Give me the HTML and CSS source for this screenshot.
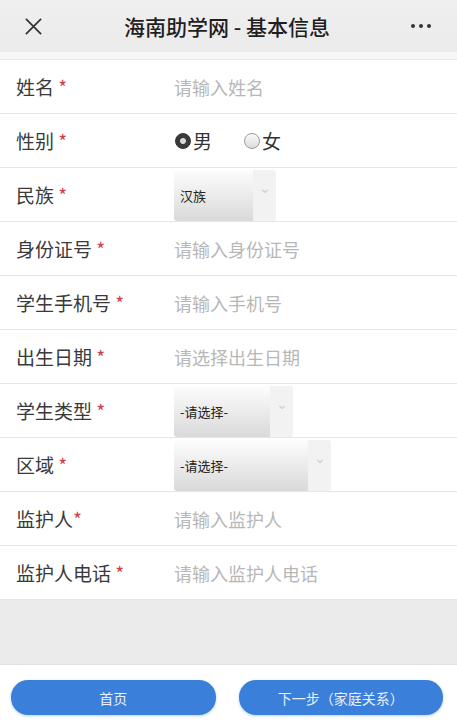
FILE: index.html
```html
<!DOCTYPE html>
<html lang="zh-CN">
  <head>
    <meta charset="UTF-8" />
    <meta name="viewport" content="width=device-width, initial-scale=1.0" />
    <title>海南助学网 - 基本信息</title>
    <link rel="stylesheet" href="styles.css">
  </head>
  <body>
    <header class="topbar">
      <svg class="close" width="20" height="20" viewBox="0 0 20 20">
        <path d="M2 2 L18 18 M18 2 L2 18" stroke="#333" stroke-width="1.8" fill="none" />
      </svg>
      <h1>海南助学网 - 基本信息</h1>
      <span class="more"><i></i><i></i><i></i></span>
    </header>
    <div class="gap"></div>

    <form class="info-form">
      <div class="row">
        <label>姓名 <em>*</em></label>
        <input type="text" placeholder="请输入姓名" />
      </div>
      <div class="row">
        <label>性别 <em>*</em></label>
        <div class="radios">
          <span class="radio checked"></span><span class="opt">男</span>
          <span class="radio"></span><span class="opt">女</span>
        </div>
      </div>
      <div class="row">
        <label>民族 <em>*</em></label>
        <div class="select w-nation"><span>汉族</span><b>&#8964;</b></div>
      </div>
      <div class="row">
        <label>身份证号 <em>*</em></label>
        <input type="text" placeholder="请输入身份证号" />
      </div>
      <div class="row">
        <label>学生手机号 <em>*</em></label>
        <input type="text" placeholder="请输入手机号" />
      </div>
      <div class="row">
        <label>出生日期 <em>*</em></label>
        <input type="text" placeholder="请选择出生日期" />
      </div>
      <div class="row">
        <label>学生类型 <em>*</em></label>
        <div class="select w-type"><span>-请选择-</span><b>&#8964;</b></div>
      </div>
      <div class="row">
        <label>区域 <em>*</em></label>
        <div class="select w-area"><span>-请选择-</span><b>&#8964;</b></div>
      </div>
      <div class="row">
        <label>监护人<em>*</em></label>
        <input type="text" placeholder="请输入监护人" />
      </div>
      <div class="row">
        <label>监护人电话 <em>*</em></label>
        <input type="text" placeholder="请输入监护人电话" />
      </div>
    </form>

    <div class="filler"></div>

    <footer class="actions">
      <button type="button">首页</button>
      <button type="button">下一步（家庭关系）</button>
    </footer>
  </body>
</html>
```

FILE: styles.css
```css
html, body {
  margin: 0;
  height: 100%;
}

body {
  font-family: "Noto Sans CJK SC", "Noto Sans", sans-serif;
  background-color: #ebebeb;
  display: flex;
  flex-direction: column;
  color: #333;
}

.topbar {
  height: 52px;
  display: flex;
  align-items: center;
  justify-content: space-between;
  padding: 0 24px 0 24px;
  background: linear-gradient(to bottom, #efefef, #ebebeb);
}

.topbar h1 {
  margin: 0;
  font-size: 21px;
  font-weight: 500;
  color: #1f1f1f;
}

.close {
  width: 19px;
  height: 19px;
}

.more {
  display: flex;
  gap: 4px;
  padding-right: 2px;
}

.more i {
  width: 4px;
  height: 4px;
  border-radius: 50%;
  background-color: #333;
}

.gap {
  height: 7px;
  background-color: #f6f6f6;
  border-bottom: 1px solid #e6e6e6;
}

.info-form {
  background-color: #fff;
}

.row {
  height: 53px;
  display: flex;
  align-items: center;
  border-bottom: 1px solid #e6e6e6;
}

.row label {
  width: 158px;
  padding-left: 16px;
  font-size: 19px;
  color: #3a3a3a;
}

.row label em {
  font-style: normal;
  color: #d0414a;
}

.row input {
  flex: 1;
  border: none;
  outline: none;
  font-family: inherit;
  font-size: 18px;
  color: #333;
  padding: 0;
  background: transparent;
}

.row input::placeholder {
  color: #b7b7b7;
}

.radios {
  display: flex;
  align-items: center;
  font-size: 19px;
  color: #333;
}

.radio {
  width: 14px;
  height: 14px;
  border-radius: 50%;
  border: 1px solid #9a9a9a;
  background: linear-gradient(to bottom, #fafafa, #dcdcdc);
  margin-left: 1px;
}

.radio.checked {
  border-color: #333;
  background: radial-gradient(circle, #d8d8d8 0 2.5px, #3a3a3a 3.5px);
}

.opt {
  margin-left: 2px;
  margin-right: 31px;
}

.select {
  align-self: stretch;
  margin-top: 2px;
  display: flex;
  font-size: 13px;
  color: #222;
}

.select span {
  flex: 1;
  display: flex;
  align-items: center;
  padding-left: 6px;
  background: linear-gradient(to bottom, #fdfdfd, #d9d9d9);
  border-radius: 3px 0 0 3px;
}

.select b {
  width: 23px;
  font-weight: normal;
  color: #d0d0d0;
  font-size: 14px;
  text-align: center;
  padding-top: 7px;
  background-color: #f2f2f2;
  border-radius: 0 3px 3px 0;
}

.w-nation { width: 102px; }
.w-type { width: 119px; }
.w-area { width: 157px; }

.filler {
  flex: 1;
  background-color: #ebebeb;
}

.actions {
  height: 63px;
  background-color: #fff;
  border-top: 1px solid #e2e2e2;
  display: flex;
  align-items: flex-start;
  padding: 15px 14px 0 11px;
  gap: 23px;
  box-sizing: border-box;
}

.actions button {
  flex: 1;
  height: 35px;
  border: none;
  border-radius: 17px;
  background-color: #3a7fd9;
  color: #e8f0fb;
  font-family: inherit;
  font-size: 14px;
  box-shadow: 0 1px 3px rgba(58, 127, 217, 0.35);
  cursor: pointer;
}
```
